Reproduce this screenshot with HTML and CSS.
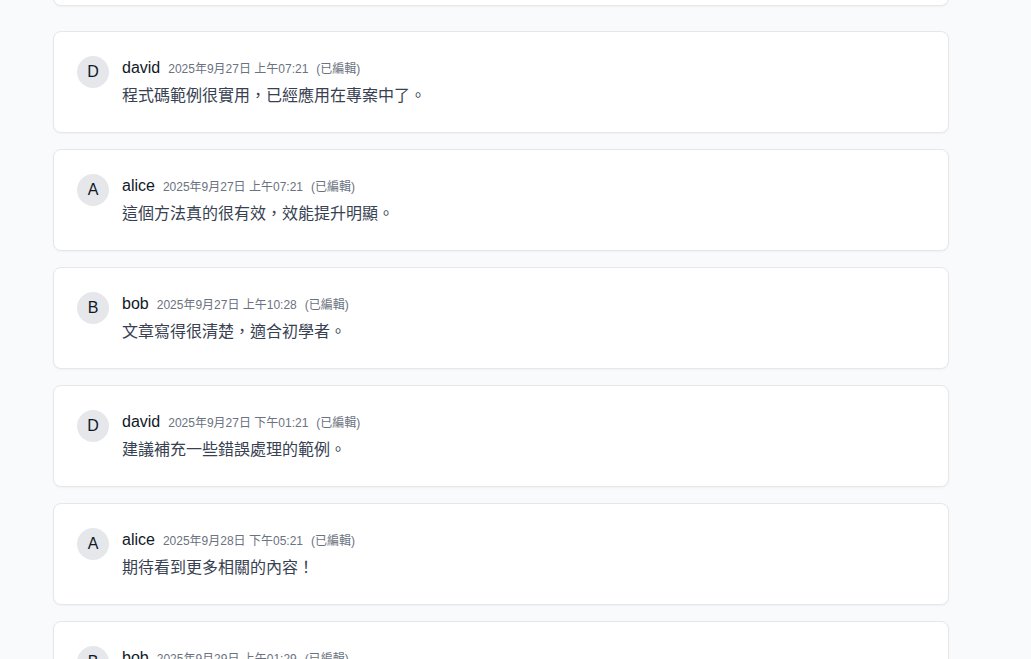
FILE: index.html
```html
<!DOCTYPE html>
<html lang="zh-Hant">
<head>
<meta charset="utf-8">
<title>留言</title>
<link rel="stylesheet" href="styles.css">
</head>
<body>
<main class="page">
  <section class="card card-top"></section>
  <ul class="comments">
    <li class="card comment">
      <div class="avatar">D</div>
      <div class="body">
        <div class="meta"><span class="name">david</span><span class="time">2025年9月27日 上午07:21</span><span class="edited">(已編輯)</span></div>
        <p class="text">程式碼範例很實用，已經應用在專案中了。</p>
      </div>
    </li>
    <li class="card comment">
      <div class="avatar">A</div>
      <div class="body">
        <div class="meta"><span class="name">alice</span><span class="time">2025年9月27日 上午07:21</span><span class="edited">(已編輯)</span></div>
        <p class="text">這個方法真的很有效，效能提升明顯。</p>
      </div>
    </li>
    <li class="card comment">
      <div class="avatar">B</div>
      <div class="body">
        <div class="meta"><span class="name">bob</span><span class="time">2025年9月27日 上午10:28</span><span class="edited">(已編輯)</span></div>
        <p class="text">文章寫得很清楚，適合初學者。</p>
      </div>
    </li>
    <li class="card comment">
      <div class="avatar">D</div>
      <div class="body">
        <div class="meta"><span class="name">david</span><span class="time">2025年9月27日 下午01:21</span><span class="edited">(已編輯)</span></div>
        <p class="text">建議補充一些錯誤處理的範例。</p>
      </div>
    </li>
    <li class="card comment">
      <div class="avatar">A</div>
      <div class="body">
        <div class="meta"><span class="name">alice</span><span class="time">2025年9月28日 下午05:21</span><span class="edited">(已編輯)</span></div>
        <p class="text">期待看到更多相關的內容！</p>
      </div>
    </li>
    <li class="card comment">
      <div class="avatar">B</div>
      <div class="body">
        <div class="meta"><span class="name">bob</span><span class="time">2025年9月29日 上午01:29</span><span class="edited">(已編輯)</span></div>
        <p class="text">謝謝分享，收穫很多。</p>
      </div>
    </li>
  </ul>
</main>
</body>
</html>
```
FILE: styles.css
```css
* { box-sizing: border-box; }
html, body {
  margin: 0;
  padding: 0;
  background: #f9fafb;
  font-family: "Liberation Sans", Arial, "Noto Sans CJK TC", sans-serif;
  color: #111827;
  overflow: hidden;
  height: 659px;
}
.page {
  width: 896px;
  margin-left: 53px;
  margin-top: -96px;
}
.card {
  background: #ffffff;
  border: 1px solid #e5e7eb;
  border-radius: 8px;
  box-shadow: 0 1px 2px rgba(0, 0, 0, 0.04);
}
.card-top {
  height: 102px;
  margin-bottom: 25px;
}
.comments {
  list-style: none;
  margin: 0;
  padding: 0;
  display: flex;
  flex-direction: column;
  gap: 16px;
}
.comment {
  display: flex;
  gap: 12px;
  padding: 24px 24px 24px 23px;
  height: 102px;
}
.avatar {
  width: 32px;
  height: 32px;
  flex: 0 0 32px;
  margin-right: 1px;
  border-radius: 50%;
  background: #e5e7eb;
  color: #111827;
  font-size: 16px;
  display: flex;
  align-items: center;
  justify-content: center;
}
.body { flex: 1; min-width: 0; }
.meta {
  display: flex;
  align-items: baseline;
  gap: 8px;
  line-height: 24px;
  height: 24px;
}
.name {
  font-size: 16px;
  color: #111827;
}
.time, .edited {
  font-size: 12px;
  color: #6b7280;
}
.text {
  margin: 4px 0 0;
  font-size: 16px;
  line-height: 24px;
  color: #374151;
}
```
